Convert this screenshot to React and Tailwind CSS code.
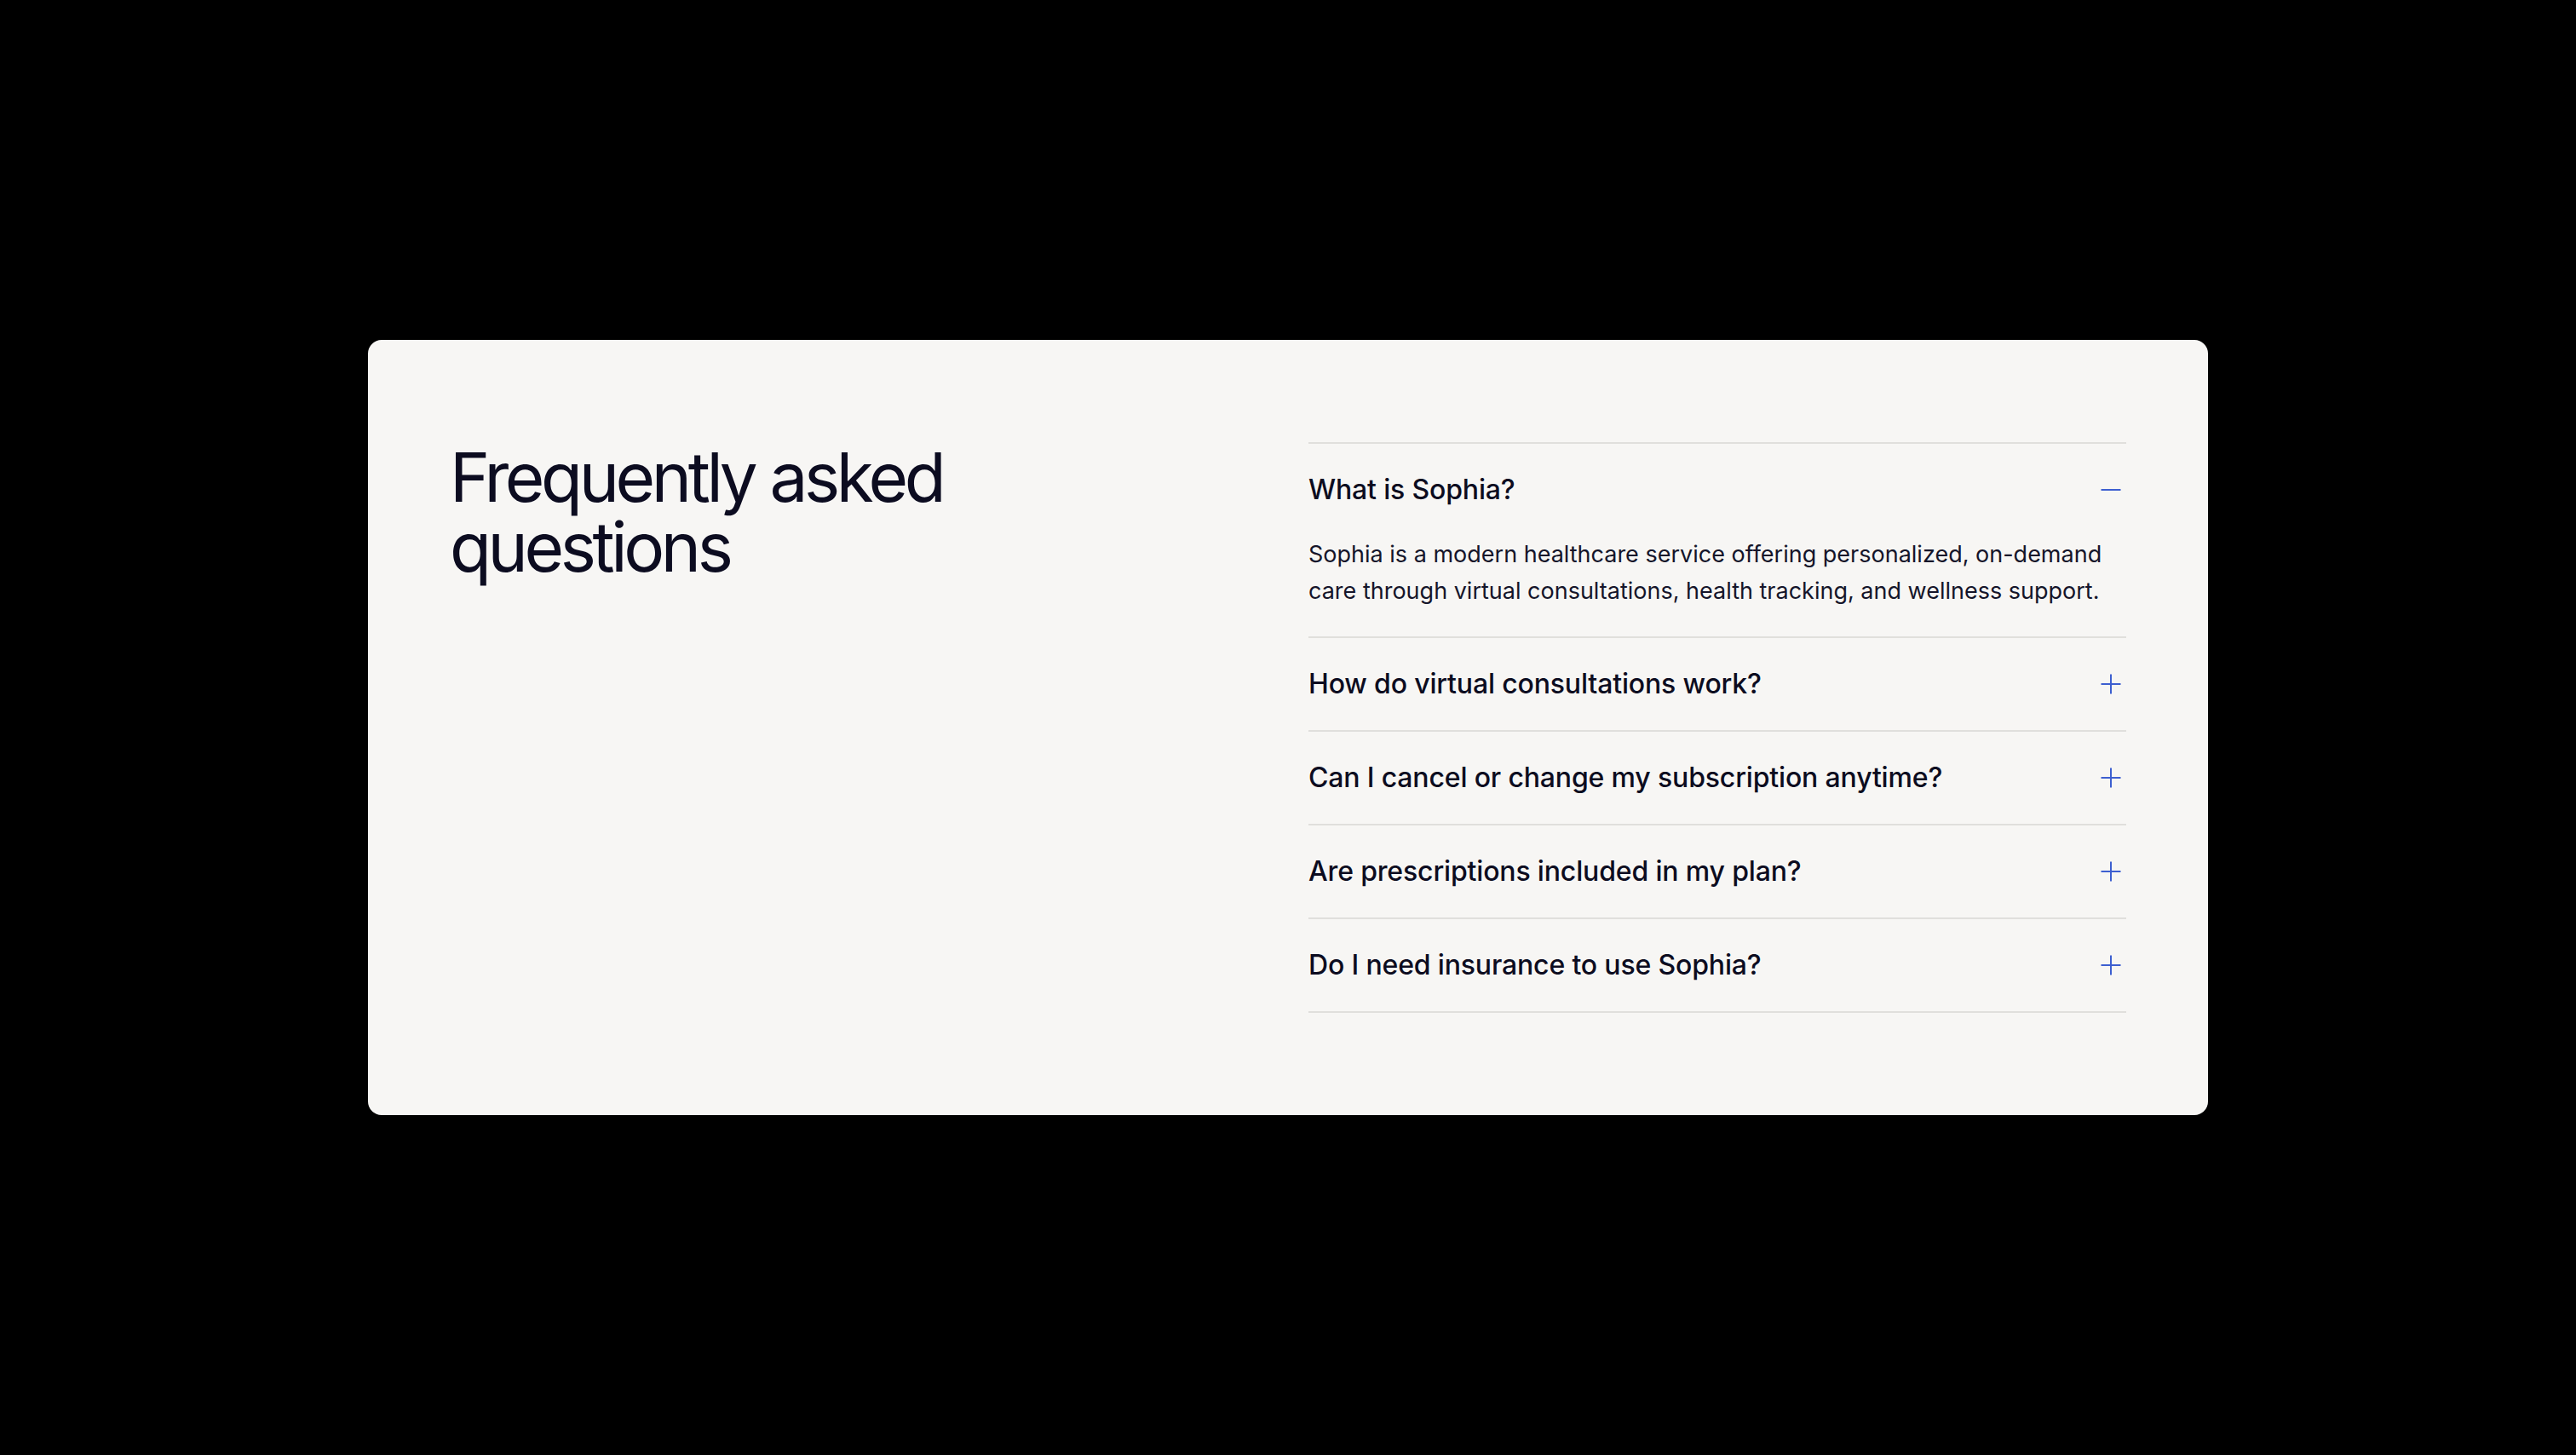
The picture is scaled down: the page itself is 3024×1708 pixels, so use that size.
import { useState } from "react";

const FAQS = [
  {
    q: "What is Sophia?",
    a: "Sophia is a modern healthcare service offering personalized, on-demand care through virtual consultations, health tracking, and wellness support.",
  },
  {
    q: "How do virtual consultations work?",
    a: "Book a time that suits you, then meet a licensed clinician over secure video from any device.",
  },
  {
    q: "Can I cancel or change my subscription anytime?",
    a: "Yes. You can upgrade, downgrade or cancel your plan at any time from your account settings.",
  },
  {
    q: "Are prescriptions included in my plan?",
    a: "Clinicians can issue prescriptions when appropriate. Medication costs depend on your pharmacy.",
  },
  {
    q: "Do I need insurance to use Sophia?",
    a: "No. Sophia works with or without insurance, with transparent pricing for every plan.",
  },
];

function ToggleIcon({ open }) {
  return (
    <svg width="24" height="24" viewBox="0 0 24 24" fill="none" className="shrink-0 mr-[6px] text-[#3d5fd0]">
      <path d="M0.5 12h23" stroke="currentColor" strokeWidth="2" />
      {!open && <path d="M12 0.5v23" stroke="currentColor" strokeWidth="2" />}
    </svg>
  );
}

export default function App() {
  const [open, setOpen] = useState(0);

  return (
    <div
      className="min-h-screen bg-black flex items-center justify-center"
      style={{ fontFamily: "Inter, 'Noto Sans', sans-serif" }}
    >
      <section className="w-[2160px] rounded-[16px] bg-[#f7f6f4] px-24 py-30 grid grid-cols-2 gap-12">
        <h2 className="text-[80px] leading-[82px] font-normal tracking-[-0.055em] text-[#0c0c20]">
          Frequently asked
          <br />
          questions
        </h2>

        <div className="border-t-2 border-[#e0dfdc]">
          {FAQS.map((f, i) => (
            <div key={f.q} className="border-b-2 border-[#e0dfdc]">
              <button
                onClick={() => setOpen(open === i ? -1 : i)}
                className="w-full flex items-center justify-between py-8 text-left"
              >
                <span className="text-[32px] leading-[44px] font-medium tracking-[-0.005em] text-[#0c0c20]">
                  {f.q}
                </span>
                <ToggleIcon open={open === i} />
              </button>
              {open === i && (
                <p className="pb-8 pr-4 text-[27px] leading-[43px] text-[#15152a]">{f.a}</p>
              )}
            </div>
          ))}
        </div>
      </section>
    </div>
  );
}
